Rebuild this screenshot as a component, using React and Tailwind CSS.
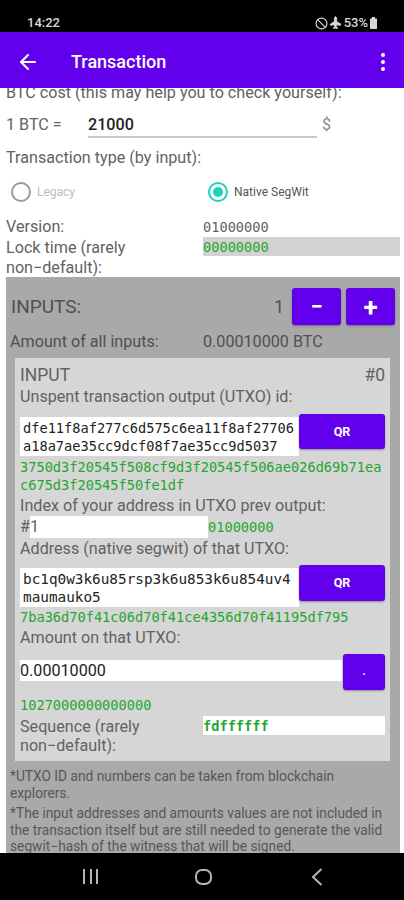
import React from 'react';
import { ArrowLeft, Ban, Plane } from 'lucide-react';

const mono = "font-['DejaVu_Sans_Mono',monospace] text-[13.65px]";

function PurpleButton({ className, children }) {
  return (
    <div className={`bg-[#6200ee] rounded-[3px] text-white flex items-center justify-center shadow-[0_1px_2px_rgba(0,0,0,0.35)] ${className}`}>
      {children}
    </div>
  );
}

function Radio({ checked }) {
  return (
    <div className={`w-[20px] h-[20px] rounded-full border-2 flex items-center justify-center ${checked ? 'border-[#1fd0bd]' : 'border-[#9a9a9a]'}`}>
      {checked && <div className="w-[10px] h-[10px] rounded-full bg-[#1fd0bd]" />}
    </div>
  );
}

export default function App() {
  return (
    <div className="h-[900px] w-[404px] flex flex-col overflow-hidden bg-white font-['Roboto',sans-serif] text-[#626262] text-[16.15px] leading-[20px]">
      {/* Status bar */}
      <div className="h-[32px] shrink-0 bg-black text-[#d8d8d8] flex items-center justify-between pl-[27px] pr-[26px] pt-[14px] text-[13px] font-medium">
        <span>14:22</span>
        <div className="flex items-center">
          <Ban className="w-[13px] h-[13px] mr-[1px]" strokeWidth={2.2} />
          <Plane className="w-[13px] h-[13px] fill-current rotate-[-45deg]" strokeWidth={1.5} />
          <span className="ml-[2px]">53%</span>
          <svg width="9" height="12" viewBox="0 0 9 12" className="ml-[1px]">
            <path d="M3 0h3v1.5h2V12H1V1.5h2z" fill="#d8d8d8" />
          </svg>
        </div>
      </div>

      {/* App bar */}
      <div className="h-[56px] shrink-0 bg-[#6200ee] text-white flex items-center relative z-10 pt-[4px]">
        <ArrowLeft className="w-[24px] h-[24px] ml-[16px]" strokeWidth={2} />
        <span className="ml-[31px] text-[18px] font-medium">Transaction</span>
        <div className="ml-auto mr-[19px] flex flex-col gap-[3px]">
          <div className="w-[4px] h-[4px] rounded-full bg-white" />
          <div className="w-[4px] h-[4px] rounded-full bg-white" />
          <div className="w-[4px] h-[4px] rounded-full bg-white" />
        </div>
      </div>

      {/* Scrolled content */}
      <div className="flex-1 min-h-0 overflow-hidden">
        <div className="-mt-[5px] pl-[6px] pr-[4px]">
          <div className="h-[20px] whitespace-nowrap">BTC cost (this may help you to check yourself):</div>

          <div className="flex items-start h-[28px] mt-[8px]">
            <span className="w-[82px] leading-[27px]">1 BTC =</span>
            <div className="w-[229px] h-[27px] border-b-2 border-[#c9c9c9] text-[#222] leading-[27px] font-medium">21000</div>
            <span className="ml-[5px] text-[#8a8a8a] leading-[27px]">$</span>
          </div>

          <div className="mt-[9px] h-[20px]">Transaction type (by input):</div>

          <div className="flex items-center h-[24px] mt-[12px] text-[12px]">
            <div className="w-[202px] flex items-center pl-[5px]">
              <Radio />
              <span className="ml-[6px] text-[#bdbdbd]">Legacy</span>
            </div>
            <Radio checked />
            <span className="ml-[6px] text-[#555]">Native SegWit</span>
          </div>

          <div className="flex h-[20px] mt-[13px] items-center">
            <span className="w-[197px]">Version:</span>
            <span className={mono}>01000000</span>
          </div>
          <div className="flex mt-[1px]">
            <span className="w-[197px] leading-[20px]">Lock time (rarely<br />non−default):</span>
            <div className="w-[197px] h-[19px] -mt-[1px] bg-[#d2d2d2] flex items-center">
              <span className={`${mono} text-[#22a82e]`}>00000000</span>
            </div>
          </div>

          {/* Inputs panel */}
          <div className="bg-[#a9a9a9] mt-[-1px] pt-[11px] pb-[4px] text-[#505050]">
            <div className="flex items-center pl-[5px] pr-[5px] h-[37px]">
              <span className="text-[19px]">INPUTS:</span>
              <span className="ml-auto mr-[8px] text-[18px]">1</span>
              <PurpleButton className="w-[49px] h-[37px] text-[22px] font-bold">−</PurpleButton>
              <PurpleButton className="w-[49px] h-[37px] ml-[5px] text-[26px] font-bold">+</PurpleButton>
            </div>
            <div className="flex h-[20px] items-center mt-[7px] pl-[4px]">
              <span className="w-[193px]">Amount of all inputs:</span>
              <span>0.00010000 BTC</span>
            </div>

            {/* Input card */}
            <div className="bg-[#d6d6d6] ml-[9px] mr-[10px] mt-[6px] px-[5px] pt-[7px] h-[403px] text-[#626262]">
              <div className="flex justify-between h-[20px] items-center text-[17.5px]">
                <span>INPUT</span>
                <span>#0</span>
              </div>
              <div className="mt-[2px] h-[20px] whitespace-nowrap">Unspent transaction output (UTXO) id:</div>

              <div className="flex items-start mt-[7px] h-[42px]">
                <div className={`w-[279px] shrink-0 h-[39px] mt-[3px] bg-white overflow-hidden pl-[3px] pt-[2px] leading-[18px] text-[#222] ${mono}`}>
                  dfe11f8af277c6d575c6ea11f8af27706<br />a18a7ae35cc9dcf08f7ae35cc9d5037
                </div>
                <PurpleButton className="w-[86px] shrink-0 h-[35px] text-[12.5px] font-bold">QR</PurpleButton>
              </div>
              <div className={`${mono} text-[#22a82e] leading-[18px] mt-[2px] whitespace-nowrap`}>
                3750d3f20545f508cf9d3f20545f506ae026d69b71ea<br />c675d3f20545f50fe1df
              </div>

              <div className="mt-[2px] h-[20px] whitespace-nowrap">Index of your address in UTXO prev output:</div>
              <div className="flex items-center h-[22px]">
                <span className="w-[10px]">#</span>
                <div className="w-[178px] h-[22px] bg-white leading-[22px]">1</div>
                <span className={`${mono} text-[#22a82e]`}>01000000</span>
              </div>

              <div className="mt-[1px] h-[20px] whitespace-nowrap">Address (native segwit) of that UTXO:</div>
              <div className="flex items-start mt-[6px] h-[42px]">
                <div className="w-[279px] shrink-0 h-[39px] mt-[3px] bg-white overflow-hidden pl-[3px] pt-[2px] leading-[18px] text-[#222] font-['DejaVu_Sans_Mono',monospace] text-[14.35px]">
                  bc1q0w3k6u85rsp3k6u853k6u854uv4<br />maumauko5
                </div>
                <PurpleButton className="w-[86px] shrink-0 h-[36px] text-[12.5px] font-bold">QR</PurpleButton>
              </div>
              <div className={`${mono} text-[#22a82e] leading-[18px] mt-[1px] whitespace-nowrap`}>7ba36d70f41c06d70f41ce4356d70f41195df795</div>

              <div className="mt-[2px] h-[20px]">Amount on that UTXO:</div>
              <div className="flex items-start mt-[6px] h-[36px]">
                <div className="w-[322px] shrink-0 h-[21px] mt-[6px] bg-white leading-[21px] text-[#222]">0.00010000</div>
                <PurpleButton className="w-[42px] shrink-0 h-[36px] ml-[1px] text-[11px] font-bold">.</PurpleButton>
              </div>

              <div className={`${mono} text-[#22a82e] mt-[6px] leading-[18px]`}>1027000000000000</div>
              <div className="flex mt-[2px]">
                <span className="w-[183px] leading-[19px] pt-[1px]">Sequence (rarely<br />non−default):</span>
                <div className="w-[182px] h-[19px] bg-white flex items-center">
                  <span className={`${mono} text-[#22a82e] font-bold`}>fdffffff</span>
                </div>
              </div>
            </div>

            <div className="pl-[4px] pr-[8px] mt-[7px] text-[13.75px] leading-[16.5px] text-[#575757]">
              <div>*UTXO ID and numbers can be taken from blockchain explorers.</div>
              <div className="mt-[4px]">*The input addresses and amounts values are not included in the transaction itself but are still needed to generate the valid segwit−hash of the witness that will be signed.</div>
            </div>
          </div>
        </div>
      </div>

      {/* Navigation bar */}
      <div className="h-[47px] shrink-0 bg-black flex items-center relative z-10">
        <div className="w-[15px] ml-[83px] flex justify-between h-[15px]">
          <div className="w-[2px] bg-[#b5b5b5]" />
          <div className="w-[2px] bg-[#b5b5b5]" />
          <div className="w-[2px] bg-[#b5b5b5]" />
        </div>
        <div className="w-[17px] h-[16px] rounded-[7px] border-2 border-[#b5b5b5] ml-[97px]" />
        <svg width="12" height="18" viewBox="0 0 12 18" className="ml-[99px]" fill="none" stroke="#b5b5b5" strokeWidth="2">
          <path d="M10.5 1 L2 9 L10.5 17" />
        </svg>
      </div>
    </div>
  );
}
